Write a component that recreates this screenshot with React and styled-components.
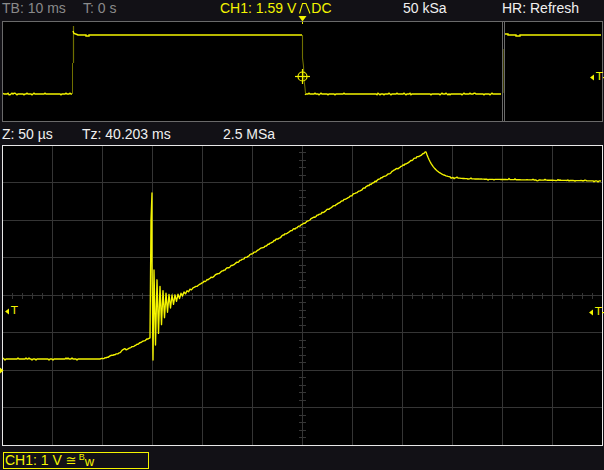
import React from 'react';
import styled, { createGlobalStyle } from 'styled-components';

const YELLOW = '#f4f400';
const OLIVE = '#6f6f00';

const Global = createGlobalStyle`
  html, body { margin: 0; padding: 0; background: #121116; }
  body { font-family: "Liberation Sans", Arial, sans-serif; }
`;

const Screen = styled.div`
  position: relative;
  width: 604px;
  height: 470px;
  background: #121116;
  overflow: hidden;
  display: flex;
  flex-direction: column;
`;

const InfoBar = styled.div`
  flex: none;
  height: ${(p) => p.$h}px;
  box-sizing: border-box;
  padding: ${(p) => p.$pt}px 0 0 2px;
  display: flex;
  align-items: flex-start;
  font-size: 14px;
  line-height: 16px;
  white-space: nowrap;
`;

const toneColor = { dim: '#8a8a8a', ch: YELLOW, bright: '#f0f0f0' };

const Field = styled.span`
  flex: none;
  width: ${(p) => p.$w}px;
  color: ${(p) => toneColor[p.$tone || 'bright']};
  display: inline-flex;
  align-items: center;
`;

const SlopeIcon = styled.svg`
  width: 12px;
  height: 12px;
  margin: 0 0 0 3px;
`;

const Overview = styled.div`
  flex: none;
  margin-left: 2px;
  width: 601px;
  height: 101px;
  box-sizing: border-box;
  border: 1px solid #6a6a6a;
  background: #000;
  display: flex;
`;

const Pane = styled.div`
  position: relative;
  flex: none;
  width: ${(p) => p.$w}px;
  height: 100%;
`;

const Divider = styled.div`
  flex: none;
  width: 3px;
  box-sizing: border-box;
  border-left: 1px solid #6a6a6a;
  border-right: 1px solid #6a6a6a;
  background: linear-gradient(#000 0 27px, #3a3a00 27px 71px, #000 71px);
`;

const Graticule = styled.div`
  position: relative;
  flex: none;
  margin-left: 2px;
  width: 601px;
  height: 301px;
  box-sizing: border-box;
  border: 1px solid #e8e8e8;
  background: #000;
`;

const Plot = styled.svg`
  position: absolute;
  inset: 0;
  width: 100%;
  height: 100%;
  display: block;
`;

const Footer = styled.div`
  flex: 1;
  padding: 6px 0 0 3px;
`;

const ChannelBox = styled.div`
  width: 146px;
  height: 17px;
  box-sizing: border-box;
  border: 1px solid ${YELLOW};
  padding-left: 1px;
  color: ${YELLOW};
  font-size: 14px;
  line-height: 15px;
  white-space: nowrap;
  display: flex;
  align-items: flex-start;
`;

const Coupling = styled.span`
  font-family: "DejaVu Sans", sans-serif;
  font-size: 13px;
  margin-left: 4px;
`;

const BwMark = styled.span`
  display: inline-flex;
  align-items: flex-start;
  margin-left: 2px;
  font-size: 9px;
  line-height: 9px;
  & > i { font-style: normal; }
  & > b { font-weight: normal; font-size: 13px; line-height: 15px; margin-top: 1px; }
`;

const Tag = styled.div`
  position: absolute;
  left: ${(p) => p.$x}px;
  top: ${(p) => p.$y}px;
  display: flex;
  align-items: center;
  color: ${YELLOW};
  font-size: 11px;
  line-height: 10px;
  font-family: "DejaVu Sans", sans-serif;
`;

const TriggerMark = styled.svg`
  position: absolute;
  left: 298px;
  top: 15px;
  width: 9px;
  height: 7px;
`;

const GroundMark = styled.svg`
  position: absolute;
  left: 0;
  top: 367px;
  width: 4px;
  height: 7px;
`;

function rng(seed) {
  let s = seed;
  return () => {
    s = (s * 16807) % 2147483647;
    return (s - 1) / 2147483646;
  };
}

const toPts = (arr) => arr.map(([x, y]) => `${x.toFixed(1)},${y.toFixed(1)}`).join(' ');

// Zoomed acquisition: flat baseline, slow lift, ringing burst, linear ramp, exponential settle
function zoomTrace() {
  const r = rng(11);
  const pts = [];
  const ramp = (x) => 290 - 0.585 * (x - 190);
  for (let x = 3; x <= 100; x++) {
    const blip = r() < 0.12 ? (r() < 0.5 ? -1 : 1) : 0;
    pts.push([x, 359 + blip]);
  }
  for (let x = 101; x <= 150; x++) {
    const t = (x - 100) / 51;
    const step = x >= 122 && x < 126 ? -1.5 : 0;
    pts.push([x, 359 - 22 * Math.pow(t, 1.3) + step + (r() - 0.5)]);
  }
  pts.push([151, 220], [152, 193], [152, 262], [153, 360]);
  let sign = -1;
  for (let x = 154; x <= 192; x += 1.5) {
    const a = 46 * Math.exp(-(x - 153) / 9);
    pts.push([x, ramp(x) + sign * a]);
    sign = -sign;
  }
  for (let x = 193; x <= 426; x++) pts.push([x, ramp(x) + (r() - 0.5) * 1.2]);
  for (let x = 427; x <= 601; x++) {
    const base = 179 + (x - 470) * 0.015;
    const jitter = x > 445 && r() < 0.25 ? (r() - 0.5) * 2.4 : 0;
    pts.push([x, base - (base - 152) * Math.exp(-(x - 426) / 9) + jitter]);
  }
  return toPts(pts);
}

function noisyLevel(x0, x1, y, seed) {
  const r = rng(seed);
  const pts = [];
  for (let x = x0; x <= x1; x++) {
    const blip = r() < 0.18 ? (r() < 0.5 ? -0.8 : 0.8) : 0;
    pts.push([x, y + blip]);
  }
  return pts;
}

const leftLevelA = toPts(noisyLevel(3, 72, 94, 3));
const leftLevelB = toPts([
  [73, 31], [74, 33.5], [77, 34.5], [78, 35], [86, 35], [86, 36], [89, 36], [89, 35], [302, 35],
]);
const leftLevelC = toPts(noisyLevel(305, 501, 94, 5));
const rightLevel = toPts([
  [505, 34], [508, 34], [508, 35], [516, 35], [516, 36], [520, 36], [520, 35], [601, 35],
]);

const ZOOM_TRACE = zoomTrace();

const vLines = Array.from({ length: 11 }, (_, i) => 52.5 + i * 50);
const hLines = [182.5, 220.5, 257.5, 295.5, 332.5, 370.5, 407.5];
const hTicks = Array.from({ length: 59 }, (_, i) => 12.5 + i * 10);
const vTicks = Array.from({ length: 39 }, (_, i) => 152.5 + i * 7.5);

function GridLayer() {
  return (
    <g stroke="#353535" strokeWidth="1" shapeRendering="crispEdges">
      {vLines.map((x) => (
        <line key={`v${x}`} x1={x} y1={146} x2={x} y2={445} />
      ))}
      {hLines.map((y) => (
        <line key={`h${y}`} x1={3} y1={y} x2={602} y2={y} />
      ))}
      {hTicks.map((x) => (
        <line key={`ht${x}`} x1={x} y1={292.5} x2={x} y2={298.5} />
      ))}
      {vTicks.map((y) => (
        <line key={`vt${y}`} x1={299} y1={y} x2={306} y2={y} />
      ))}
    </g>
  );
}

function LevelTag({ x, y, tail }) {
  return (
    <Tag $x={x} $y={y}>
      <svg width="5" height="7" viewBox="0 0 5 7">
        <path d="M0 3.5 L4 0.5 L4 6.5 Z" fill={YELLOW} />
      </svg>
      <span style={{ marginLeft: 1 }}>T</span>
      {tail && (
        <svg width="4" height="7" viewBox="0 0 4 7">
          <rect x="0" y="3" width="4" height="1.2" fill={YELLOW} />
        </svg>
      )}
    </Tag>
  );
}

export default function App() {
  return (
    <>
      <Global />
      <Screen>
        <InfoBar $h={21} $pt={0}>
          <Field $w={81} $tone="dim">TB: 10 ms</Field>
          <Field $w={137} $tone="dim">T: 0 s</Field>
          <Field $w={183} $tone="ch">
            CH1: 1.59 V
            <SlopeIcon viewBox="0 0 12 12">
              <path d="M0.5 11.5 L3.5 1.5 L7 1.5 L11 11.5" fill="none" stroke={YELLOW} strokeWidth="1.1" />
            </SlopeIcon>
            DC
          </Field>
          <Field $w={99}>50 kSa</Field>
          <Field $w={100}>HR: Refresh</Field>
        </InfoBar>
        <TriggerMark viewBox="0 0 9 7">
          <path d="M0.5 1 L8.5 1 L4.5 6.5 Z" fill={YELLOW} />
        </TriggerMark>

        <Overview>
          <Pane $w={499}>
            <Plot viewBox="3 22 499 99" preserveAspectRatio="none">
              <polyline points={leftLevelA} fill="none" stroke={YELLOW} strokeWidth="1.4" />
              <line x1={72.5} y1={94} x2={72.5} y2={63} stroke={OLIVE} strokeWidth="1" />
              <line x1={73.5} y1={63} x2={73.5} y2={26} stroke={OLIVE} strokeWidth="1.2" />
              <polyline points={leftLevelB} fill="none" stroke={YELLOW} strokeWidth="1.4" />
              <polyline points="302.5,35 302.5,58 303.5,66 304,80 305,88 305.5,93" fill="none" stroke={OLIVE} strokeWidth="1.1" />
              <polyline points={leftLevelC} fill="none" stroke={YELLOW} strokeWidth="1.4" />
              <g stroke={YELLOW} strokeWidth="1.2" fill="none">
                <circle cx={302.5} cy={76.5} r={4.5} />
                <line x1={295} y1={76.5} x2={310} y2={76.5} />
                <line x1={302.5} y1={69} x2={302.5} y2={84} />
              </g>
              <line x1={302.5} y1={22} x2={302.5} y2={24} stroke={YELLOW} strokeWidth="1" />
            </Plot>
          </Pane>
          <Divider />
          <Pane $w={97}>
            <Plot viewBox="505 22 97 99" preserveAspectRatio="none">
              <polyline points={rightLevel} fill="none" stroke={YELLOW} strokeWidth="1.4" />
            </Plot>
            <LevelTag x={85} y={50} tail />
          </Pane>
        </Overview>

        <InfoBar $h={23} $pt={4}>
          <Field $w={80}>Z: 50 µs</Field>
          <Field $w={141}>Tz: 40.203 ms</Field>
          <Field $w={100}>2.5 MSa</Field>
        </InfoBar>

        <Graticule>
          <Plot viewBox="3 146 599 299" preserveAspectRatio="none">
            <GridLayer />
            <polyline points={ZOOM_TRACE} fill="none" stroke={YELLOW} strokeWidth="1.35" strokeLinejoin="round" />
          </Plot>
          <LevelTag x={2} y={160} />
          <LevelTag x={586} y={161} tail />
        </Graticule>
        <GroundMark viewBox="0 0 4 7">
          <path d="M0 0.5 L3.5 3.5 L0 6.5 Z" fill={YELLOW} />
        </GroundMark>

        <Footer>
          <ChannelBox>
            CH1: 1 V
            <Coupling>≅</Coupling>
            <BwMark>
              <i>B</i>
              <b>w</b>
            </BwMark>
          </ChannelBox>
        </Footer>
      </Screen>
    </>
  );
}
